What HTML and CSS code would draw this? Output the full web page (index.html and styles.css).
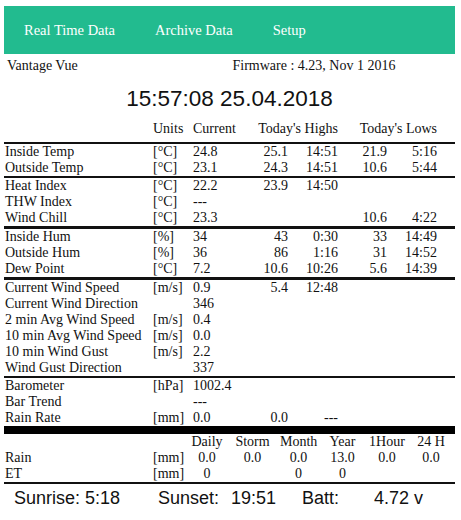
FILE: index.html
```html
<!DOCTYPE html>
<html>
<head>
<meta charset="utf-8">
<title>Vantage Vue</title>
<link rel="stylesheet" href="styles.css">
</head>
<body>
<nav class="nav">
  <a class="nav-link" href="#">Real Time Data</a>
  <a class="nav-link" href="#">Archive Data</a>
  <a class="nav-link" href="#">Setup</a>
</nav>
<div class="info">
  <div class="info-cell">Vantage Vue</div>
  <div class="info-cell">Firmware : 4.23, Nov 1 2016</div>
</div>
<h1 class="clock">15:57:08 25.04.2018</h1>
<table class="data">
  <colgroup>
    <col class="c-label"><col class="c-unit"><col class="c-cur"><col class="c-hv"><col class="c-ht"><col class="c-lv"><col class="c-lt"><col class="c-pad">
  </colgroup>
  <tr class="head">
    <td></td><td>Units</td><td>Current</td><td class="r" colspan="2">Today's Highs</td><td class="r" colspan="2">Today's Lows</td><td></td>
  </tr>
  <tr class="sep"><td>Inside Temp</td><td>[°C]</td><td>24.8</td><td class="r">25.1</td><td class="r">14:51</td><td class="r">21.9</td><td class="r">5:16</td><td></td></tr>
  <tr><td>Outside Temp</td><td>[°C]</td><td>23.1</td><td class="r">24.3</td><td class="r">14:51</td><td class="r">10.6</td><td class="r">5:44</td><td></td></tr>
  <tr class="sep"><td>Heat Index</td><td>[°C]</td><td>22.2</td><td class="r">23.9</td><td class="r">14:50</td><td></td><td></td><td></td></tr>
  <tr><td>THW Index</td><td>[°C]</td><td>---</td><td></td><td></td><td></td><td></td><td></td></tr>
  <tr><td>Wind Chill</td><td>[°C]</td><td>23.3</td><td></td><td></td><td class="r">10.6</td><td class="r">4:22</td><td></td></tr>
  <tr class="sep thick"><td>Inside Hum</td><td>[%]</td><td>34</td><td class="r">43</td><td class="r">0:30</td><td class="r">33</td><td class="r">14:49</td><td></td></tr>
  <tr><td>Outside Hum</td><td>[%]</td><td>36</td><td class="r">86</td><td class="r">1:16</td><td class="r">31</td><td class="r">14:52</td><td></td></tr>
  <tr><td>Dew Point</td><td>[°C]</td><td>7.2</td><td class="r">10.6</td><td class="r">10:26</td><td class="r">5.6</td><td class="r">14:39</td><td></td></tr>
  <tr class="sep thick"><td>Current Wind Speed</td><td>[m/s]</td><td>0.9</td><td class="r">5.4</td><td class="r">12:48</td><td></td><td></td><td></td></tr>
  <tr><td>Current Wind Direction</td><td></td><td>346</td><td></td><td></td><td></td><td></td><td></td></tr>
  <tr><td>2 min Avg Wind Speed</td><td>[m/s]</td><td>0.4</td><td></td><td></td><td></td><td></td><td></td></tr>
  <tr><td>10 min Avg Wind Speed</td><td>[m/s]</td><td>0.0</td><td></td><td></td><td></td><td></td><td></td></tr>
  <tr><td>10 min Wind Gust</td><td>[m/s]</td><td>2.2</td><td></td><td></td><td></td><td></td><td></td></tr>
  <tr><td>Wind Gust Direction</td><td></td><td>337</td><td></td><td></td><td></td><td></td><td></td></tr>
  <tr class="sep"><td>Barometer</td><td>[hPa]</td><td>1002.4</td><td></td><td></td><td></td><td></td><td></td></tr>
  <tr><td>Bar Trend</td><td></td><td>---</td><td></td><td></td><td></td><td></td><td></td></tr>
  <tr><td>Rain Rate</td><td>[mm]</td><td>0.0</td><td class="r">0.0</td><td class="r">---</td><td></td><td></td><td></td></tr>
</table>
<table class="rain">
  <colgroup>
    <col class="r-label"><col class="r-unit"><col class="r-daily"><col class="r-storm"><col class="r-month"><col class="r-year"><col class="r-hour"><col class="r-24">
  </colgroup>
  <tr><td></td><td></td><td class="c">Daily</td><td class="c">Storm</td><td class="c">Month</td><td class="c">Year</td><td class="c">1Hour</td><td class="c">24 H</td></tr>
  <tr><td>Rain</td><td>[mm]</td><td class="c">0.0</td><td class="c">0.0</td><td class="c">0.0</td><td class="c">13.0</td><td class="c">0.0</td><td class="c">0.0</td></tr>
  <tr><td>ET</td><td>[mm]</td><td class="c">0</td><td></td><td class="c">0</td><td class="c">0</td><td></td><td></td></tr>
</table>
<div class="footer">
  <div class="f-cell">Sunrise: 5:18</div>
  <div class="f-cell">Sunset:<span class="f-gap">19:51</span></div>
  <div class="f-cell">Batt:</div>
  <div class="f-cell">4.72 v</div>
</div>
</body>
</html>
```
FILE: styles.css
```css
html, body {
  background: #fff;
}
body {
  margin: 0;
  padding: 6px 6px 0 4px;
  font-family: "Liberation Serif", "Times New Roman", serif;
  font-size: 14px;
  color: #111;
}
.nav {
  display: flex;
  align-items: center;
  height: 48px;
  background: #22bb8f;
}
.nav-link {
  padding: 0 20px;
  color: #fff;
  text-decoration: none;
  font-size: 14.5px;
  line-height: 16px;
}
.info {
  display: grid;
  grid-template-columns: 1fr 1fr;
  margin-top: 4px;
  line-height: 16px;
}
.info-cell {
  padding: 0 3px;
}
.clock {
  margin: 12px 0 0;
  text-align: center;
  font-family: "Liberation Sans", Arial, sans-serif;
  font-weight: normal;
  font-size: 22.5px;
  line-height: 26px;
  color: #111;
}
table {
  width: 451px;
  border-collapse: collapse;
  table-layout: fixed;
  font-size: 14px;
}
td {
  padding: 0 1px;
  line-height: 16px;
  height: 16px;
  white-space: nowrap;
  vertical-align: top;
}
.data {
  margin-top: 9px;
}
.c-label { width: 148px; }
.c-unit { width: 40px; }
.c-cur { width: 58px; }
.c-hv { width: 40px; }
.c-ht { width: 50px; }
.c-lv { width: 49px; }
.c-lt { width: 50px; }
.c-pad { width: 16px; }
.head td {
  padding-bottom: 5px;
}
.r {
  text-align: right;
  padding-right: 2px;
}
.sep td {
  border-top: 2px solid #111;
}
.sep.thick td {
  border-top-width: 3px;
}
.rain {
  border-top: 8px solid #000;
}
.r-label { width: 148px; }
.r-unit { width: 36px; }
.r-daily { width: 38px; }
.r-storm { width: 53px; }
.r-month { width: 39px; }
.r-year { width: 49px; }
.r-hour { width: 40px; }
.r-24 { width: 48px; }
.c {
  text-align: center;
}
.rain tr:last-child td {
  border-bottom: 2px solid #111;
}
.footer {
  display: grid;
  grid-template-columns: 144px 144px 72px 1fr;
  padding: 4px 0 0 10px;
  font-family: "Liberation Sans", Arial, sans-serif;
  font-size: 18px;
  line-height: 21px;
  color: #111;
}
.f-gap {
  margin-left: 12px;
}
```
